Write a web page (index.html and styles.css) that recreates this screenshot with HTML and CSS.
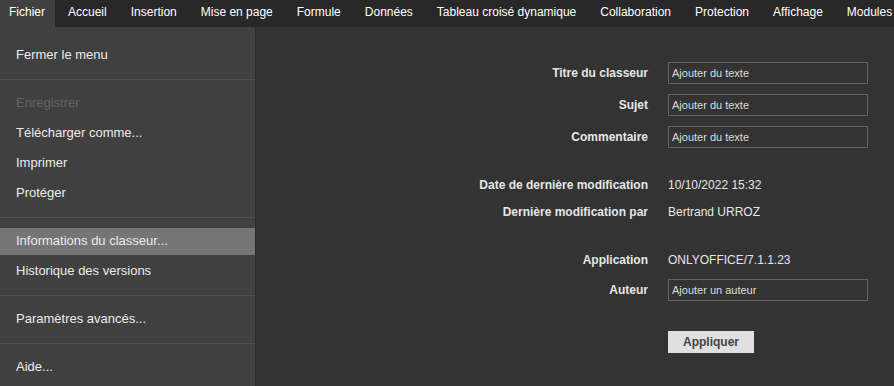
FILE: index.html
```html
<!DOCTYPE html>
<html lang="fr">
<head>
<meta charset="UTF-8">
<title>Informations du classeur</title>
<link rel="stylesheet" href="styles.css">
</head>
<body>
<div class="tab-bar">
<span class="tab active">Fichier</span>
<span class="tab">Accueil</span>
<span class="tab">Insertion</span>
<span class="tab">Mise en page</span>
<span class="tab">Formule</span>
<span class="tab">Données</span>
<span class="tab">Tableau croisé dynamique</span>
<span class="tab">Collaboration</span>
<span class="tab">Protection</span>
<span class="tab">Affichage</span>
<span class="tab">Modules</span>
</div>
<div class="main">
<ul class="side-menu">
<li class="item">Fermer le menu</li>
<li class="sep"></li>
<li class="item disabled">Enregistrer</li>
<li class="item">Télécharger comme...</li>
<li class="item">Imprimer</li>
<li class="item">Protéger</li>
<li class="sep"></li>
<li class="item selected">Informations du classeur...</li>
<li class="item">Historique des versions</li>
<li class="sep"></li>
<li class="item">Paramètres avancés...</li>
<li class="sep"></li>
<li class="item">Aide...</li>
</ul>
<div class="content">
<div class="form-row">
<label class="label">Titre du classeur</label>
<input type="text" class="text-basic" placeholder="Ajouter du texte">
</div>
<div class="form-row">
<label class="label">Sujet</label>
<input type="text" class="text-basic" placeholder="Ajouter du texte">
</div>
<div class="form-row">
<label class="label">Commentaire</label>
<input type="text" class="text-basic" placeholder="Ajouter du texte">
</div>
<div class="form-row text-row row-date">
<span class="label">Date de dernière modification</span>
<span class="value">10/10/2022 15:32</span>
</div>
<div class="form-row text-row">
<span class="label">Dernière modification par</span>
<span class="value">Bertrand URROZ</span>
</div>
<div class="form-row text-row row-app">
<span class="label">Application</span>
<span class="value">ONLYOFFICE/7.1.1.23</span>
</div>
<div class="form-row">
<label class="label">Auteur</label>
<input type="text" class="text-basic" placeholder="Ajouter un auteur">
</div>
<div class="form-row row-btn">
<span class="label"></span>
<button type="button" id="btnApply">Appliquer</button>
</div>
</div>
</div>
</body>
</html>
```

FILE: styles.css
```css
html, body { margin: 0; padding: 0; height: 100%; font-family: 'Liberation Sans', Arial, sans-serif; }
body { background: #333; display: flex; flex-direction: column; overflow: hidden; }
.tab-bar { height: 27px; background: #282828; display: flex; white-space: nowrap; flex-shrink: 0; }
.tab { padding: 0 10px; margin-right: 4px; line-height: 24px; font-size: 12px; color: #fff; }
.tab.active { background: #404040; padding-left: 9px; margin-right: 3px; }
.main { flex: 1; display: flex; }
.side-menu { width: 255px; margin: 0; padding: 15px 0 0; list-style: none; background: #404040; border-right: 1px solid #2a2a2a; }
.side-menu .item { height: 27px; line-height: 26px; padding: 0 16px; font-size: 13px; color: #ececec; }
.side-menu .item + .item { margin-top: 3px; }
.side-menu .item.disabled { color: #646464; }
.side-menu .item.selected { background: #757575; }
.side-menu .sep { height: 1px; margin: 10px 0; background: #505050; }
.content { flex: 1; padding: 35px 0 0 20px; }
.form-row { display: flex; align-items: center; margin-bottom: 10px; }
.form-row.text-row { height: 17px; }
.form-row.row-date { margin-top: 28px; }
.form-row.row-app { margin-top: 31px; margin-bottom: 11px; }
.form-row.row-btn { margin-top: 30px; }
.label { width: 372px; margin-right: 20px; text-align: right; font-size: 12px; font-weight: bold; color: #e6e6e6; }
.value { font-size: 12px; color: #e6e6e6; }
.text-basic { width: 200px; height: 22px; box-sizing: border-box; margin: 0; padding: 0 3px; border: 1px solid #646464; background: #333; font-family: 'Liberation Sans', Arial, sans-serif; font-size: 11px; color: #ddd; outline: none; }
.text-basic::placeholder { color: #ddd; opacity: 1; }
#btnApply { width: 86px; height: 22px; padding: 0; border: none; background: #e0e0e0; font-family: 'Liberation Sans', Arial, sans-serif; font-size: 12px; font-weight: bold; color: #444; }
```
